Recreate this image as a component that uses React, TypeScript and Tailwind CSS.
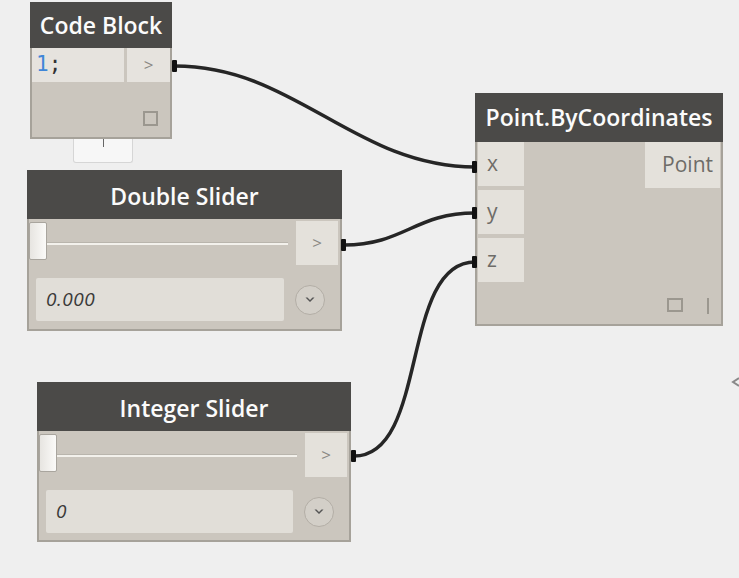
import React from "react";

const font = { fontFamily: '"Open Sans", "Liberation Sans", sans-serif' };

// bezier wire between an output port and an input port
const wire = (x1: number, y1: number, x2: number, y2: number, d: number) =>
  `M${x1},${y1} C${x1 + d},${y1} ${x2 - d},${y2} ${x2},${y2}`;

const Header = ({ title, className }: { title: string; className?: string }) => (
  <div className={`bg-[#4b4a48] text-[#fbfbfb] font-semibold text-[23px] flex items-center justify-center ${className ?? ""}`}>
    {title}
  </div>
);

const Chevron = () => (
  <div className="w-[30px] h-[30px] rounded-full border border-[#b3aea6] bg-[#d3cfc8] flex items-center justify-center">
    <svg width="12" height="8" viewBox="0 0 12 8">
      <path d="M1.5 1.5 L6 6 L10.5 1.5 L8.5 1.5 L6 4 L3.5 1.5 Z" fill="#555" />
    </svg>
  </div>
);

const Thumb = ({ h }: { h: string }) => (
  <div className={`absolute left-0 top-[1px] w-[18px] ${h} rounded-[2px] border border-[#a9a59e] bg-gradient-to-r from-[#e7e5e1] to-[#fbfaf8]`} />
);

const SliderNode = ({
  title,
  value,
  className,
}: {
  title: string;
  value: string;
  className: string;
}) => (
  <div className={`absolute flex flex-col bg-[#cbc6be] border-x-2 border-b-2 border-[#a6a29a] ${className}`}>
    <Header title={title} className="h-[49px] pt-[3px] -mx-[2px]" />
    <div className="flex mt-[2px] h-[44px]">
      <div className="relative flex-1">
        <div className="absolute left-0 right-[8px] top-[21px] h-[3px] bg-[#f3f1ec] border-t border-[#b9b5ad]" />
        <Thumb h="h-[38px]" />
      </div>
      <div className="w-[42px] mr-[2px] bg-[#e4e1db] flex items-center justify-center text-[#8a8884] text-[17px]">&gt;</div>
    </div>
    <div className="flex items-center mt-[13px] pl-[7px] pr-[15px]">
      <div className="flex-1 h-[43px] bg-[#e1ded8] rounded-[2px] flex items-center pl-[10px] italic text-[19px] tracking-[0.5px] text-[#3b3a38]">
        {value}
      </div>
      <div className="ml-[11px]">
        <Chevron />
      </div>
    </div>
  </div>
);

export default function App() {
  return (
    <div className="relative w-[739px] h-[578px] overflow-hidden bg-[#efefef]" style={font}>
      {/* Code Block */}
      <div className="absolute left-[30px] top-[2px] w-[142px] h-[137px] flex flex-col bg-[#cbc6be] border-x-2 border-b-2 border-[#a6a29a]">
        <Header title="Code Block" className="h-[46px] -mx-[2px]" />
        <div className="flex h-[34px]">
          <div className="w-[92px] bg-[#e6e3de] flex items-center pl-[4px] text-[21px]" style={{ fontFamily: '"DejaVu Sans Mono", monospace' }}>
            <span className="text-[#3f86d8]">1</span>
            <span className="text-[#333]">;</span>
          </div>
          <div className="ml-[3px] flex-1 bg-[#e6e3de] flex items-center justify-center text-[#8a8884] text-[17px]">&gt;</div>
        </div>
        <div className="flex-1 flex items-end justify-end pr-[12px] pb-[11px]">
          <div className="w-[15px] h-[15px] border-2 border-[#9b978f]" />
        </div>
      </div>
      <div className="absolute left-[73px] top-[139px] w-[60px] h-[24px] bg-[#f7f7f7] border border-t-0 border-[#d6d6d6] rounded-b-[3px] flex justify-center">
        <div className="w-[1px] h-[8px] bg-[#666]" />
      </div>

      <SliderNode title="Double Slider" value="0.000" className="left-[27px] top-[170px] w-[315px] h-[161px]" />
      <SliderNode title="Integer Slider" value="0" className="left-[37px] top-[382px] w-[314px] h-[160px]" />

      {/* Point.ByCoordinates */}
      <div className="absolute left-[475px] top-[93px] w-[248px] h-[233px] flex flex-col bg-[#cbc6be] border-x-2 border-b-2 border-[#a6a29a]">
        <Header title="Point.ByCoordinates" className="h-[49px] -mx-[2px]" />
        <div className="flex justify-between">
          <div className="flex flex-col gap-[4px] w-[46px] ml-[1px]">
            {["x", "y", "z"].map((p) => (
              <div key={p} className="h-[44px] bg-[#e4e1db] flex items-center pl-[9px] text-[21px] text-[#6e6c68]">
                {p}
              </div>
            ))}
          </div>
          <div className="w-[75px] h-[46px] mr-[1px] bg-[#e4e1db] flex items-center justify-end pr-[7px] text-[21px] text-[#6e6c68]">
            Point
          </div>
        </div>
        <div className="flex-1 flex items-end justify-end pb-[10px] pr-[12px] gap-[24px]">
          <div className="w-[16px] h-[14px] border-2 border-[#9b978f] mb-[2px]" />
          <div className="w-[2px] h-[16px] bg-[#9b978f]" />
        </div>
      </div>

      {/* wires */}
      <svg className="absolute inset-0" width="739" height="578">
        <g fill="none" stroke="#262626" strokeWidth="3.5">
          <path d={wire(175, 66, 475, 167, 120)} />
          <path d={wire(344, 245, 475, 213, 60)} />
          <path d={wire(354, 456, 475, 262, 75)} />
        </g>
        <g fill="#111">
          <rect x="172" y="60" width="5" height="12" rx="1" />
          <rect x="341" y="239" width="5" height="12" rx="1" />
          <rect x="351" y="450" width="5" height="12" rx="1" />
          <rect x="472" y="161" width="5" height="12" rx="1" />
          <rect x="472" y="207" width="5" height="12" rx="1" />
          <rect x="472" y="256" width="5" height="12" rx="1" />
        </g>
        <path d="M739 378 L733 382 L739 386" fill="none" stroke="#8a8a8a" strokeWidth="2" />
      </svg>
    </div>
  );
}
